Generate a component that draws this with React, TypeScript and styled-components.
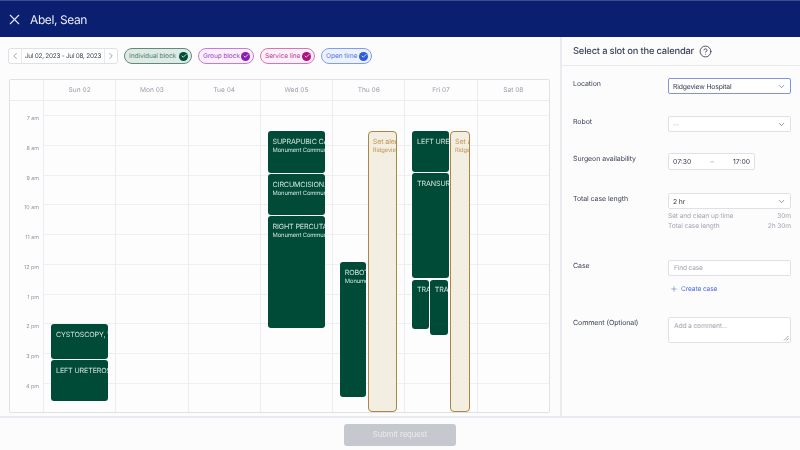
import React from "react";
import styled, { createGlobalStyle } from "styled-components";
import { X, ChevronLeft, ChevronRight, ChevronDown, CircleHelp, Check, Plus } from "lucide-react";

const GlobalStyle = createGlobalStyle`
  html, body { margin: 0; padding: 0; background: #fcfcfd; }
  body {
    font-family: "Inter", "Liberation Sans", sans-serif;
    color: #3a3f52;
    text-rendering: geometricPrecision;
  }
  * { box-sizing: border-box; }
`;

// the reference is a soft, scaled-down capture
const Page = styled.div`
  width: 800px;
  height: 450px;
  overflow: hidden;
  display: flex;
  flex-direction: column;
  filter: blur(0.3px);
`;

const TopBar = styled.header`
  height: 37px;
  flex: none;
  display: flex;
  align-items: center;
  gap: 7px;
  padding: 0 6px;
  background: #0a1f70;
  border-top: 1px solid #3d4f8f;
  color: #e8ebf5;
  font-size: 12px;
  letter-spacing: -0.4px;
`;

const Main = styled.div`
  flex: 1;
  min-height: 0;
  display: flex;
`;

const CalendarPane = styled.section`
  width: 560px;
  flex: none;
  padding: 11px 10px 0 9px;
`;

const Filters = styled.div`
  display: flex;
  align-items: center;
  height: 16px;
  gap: 6px;
  margin-bottom: 15px;
  margin-left: -1px;
`;

const DatePicker = styled.div`
  display: flex;
  width: 110px;
  height: 16px;
  border: 1px solid #dfe1e7;
  border-radius: 3px;
  background: #fff;
`;

const Arrow = styled.span`
  width: 12px;
  flex: none;
  display: flex;
  align-items: center;
  justify-content: center;
  color: #5c6172;
`;

const DateText = styled.span`
  flex: 1;
  border: 1px solid #e8e9ee;
  border-width: 0 1px;
  text-align: center;
  font-size: 6.4px;
  letter-spacing: -0.24px;
  line-height: 14px;
  color: #3f4456;
  white-space: nowrap;
`;

const chipThemes = {
  individual: { bg: "#dfe9e5", border: "#5f8a7c", text: "#4c8371", dot: "#004d38" },
  group: { bg: "#f9f0fc", border: "#c878de", text: "#a63fc6", dot: "#8a1db0" },
  service: { bg: "#fcf0f8", border: "#d873ba", text: "#c03b9b", dot: "#ad1180" },
  open: { bg: "#ecf1fe", border: "#809cf0", text: "#5577e2", dot: "#2f5bdc" },
};

type ChipKind = keyof typeof chipThemes;

const Chip = styled.span<{ $kind: ChipKind; $width: number }>`
  width: ${(p) => p.$width}px;
  height: 16px;
  flex: none;
  display: flex;
  align-items: center;
  justify-content: space-between;
  padding: 0 3px 0 4px;
  border-radius: 8px;
  border: 1px solid ${(p) => chipThemes[p.$kind].border};
  background: ${(p) => chipThemes[p.$kind].bg};
  color: ${(p) => chipThemes[p.$kind].text};
  font-size: 6.6px;
  letter-spacing: -0.1px;
  white-space: nowrap;
`;

const ChipDot = styled.span<{ $kind: ChipKind }>`
  width: 9px;
  height: 9px;
  flex: none;
  display: flex;
  align-items: center;
  justify-content: center;
  border-radius: 50%;
  background: ${(p) => chipThemes[p.$kind].dot};
  color: #fff;
`;

const Calendar = styled.div`
  width: 541px;
  height: 334px;
  border: 1px solid #dfe1e6;
  border-radius: 2px;
  background: #fdfdfe;
  display: flex;
  flex-direction: column;
  overflow: hidden;
`;

const WeekHead = styled.div`
  height: 21px;
  flex: none;
  display: grid;
  grid-template-columns: 33px repeat(7, 1fr);
  border-bottom: 1px solid #ecedf1;
`;

const DayName = styled.div`
  border-left: 1px solid #ecedf0;
  display: flex;
  align-items: center;
  justify-content: center;
  font-size: 6.6px;
  color: #999da8;
`;

const WeekBody = styled.div`
  flex: 1;
  display: grid;
  grid-template-columns: 33px repeat(7, 1fr);
`;

const Times = styled.div`
  padding-top: 15px;
  display: flex;
  flex-direction: column;
`;

const TimeLabel = styled.div`
  height: 29.75px;
  padding-right: 4px;
  text-align: right;
  font-size: 5.4px;
  line-height: 6px;
  color: #8f94a1;
`;

const DayColumn = styled.div`
  position: relative;
  padding-top: 14px;
  border-left: 1px solid #ecedf0;
`;

const HourLine = styled.div`
  height: 29.75px;
  border-top: 1px solid #f0f0f3;
`;

const EventBlock = styled.div<{ $left: number; $top: number; $width: number; $height: number }>`
  position: absolute;
  left: ${(p) => p.$left}px;
  top: ${(p) => p.$top}px;
  width: ${(p) => p.$width}px;
  height: ${(p) => p.$height}px;
  overflow: hidden;
  white-space: nowrap;
  border-radius: 3px;
  background: #004b37;
  color: #d6e5df;
  padding: 5.5px 0 0 5px;
`;

const AlertBlock = styled(EventBlock)`
  background: #f3eee2;
  border: 1px solid #ad8541;
  border-radius: 4px;
  color: #bf9650;
  padding: 4.5px 0 0 4px;
  z-index: 1;
`;

const EventTitle = styled.div`
  font-size: 7.1px;
  letter-spacing: -0.12px;
  line-height: 9px;
`;

const EventSub = styled.div`
  font-size: 5.8px;
  letter-spacing: -0.08px;
  line-height: 9px;
`;

const Sidebar = styled.aside`
  flex: 1;
  border-left: 2px solid #eaebef;
  display: flex;
  flex-direction: column;
`;

const SidebarHead = styled.div`
  height: 29px;
  flex: none;
  display: flex;
  align-items: center;
  gap: 5px;
  padding: 0 11px;
  border-bottom: 1px solid #e8e9ee;
  font-size: 9.4px;
  font-weight: 500;
  letter-spacing: -0.2px;
  color: #3f445a;
`;

const Form = styled.div`
  padding: 12px 9px 0 11px;
  display: flex;
  flex-direction: column;
`;

const Row = styled.div<{ $height: number }>`
  height: ${(p) => p.$height}px;
  display: grid;
  grid-template-columns: 95px 1fr;
  align-items: start;
`;

const Label = styled.label`
  padding-top: 1px;
  font-size: 7px;
  letter-spacing: -0.08px;
  line-height: 10px;
  color: #3a3f54;
`;

const Select = styled.div<{ $focused?: boolean; $muted?: boolean }>`
  height: 16px;
  display: flex;
  align-items: center;
  justify-content: space-between;
  padding: 0 4px;
  background: #fff;
  border-radius: 2px;
  border: 1px solid ${(p) => (p.$focused ? "#7f92e6" : "#dfe1e6")};
  color: ${(p) => (p.$muted ? "#b7bac4" : "#343a4c")};
  font-size: 6.8px;
  letter-spacing: -0.15px;
`;

const TimeRange = styled.div`
  width: 87px;
  height: 17px;
  display: flex;
  align-items: center;
  justify-content: space-between;
  padding: 0 4px;
  background: #fff;
  border-radius: 2px;
  border: 1px solid #dfe1e6;
  font-size: 6.8px;
  color: #343a4c;
`;

const Dash = styled.span`
  color: #8f94a1;
`;

const Summary = styled.div`
  display: flex;
  justify-content: space-between;
  font-size: 6.6px;
  letter-spacing: -0.1px;
  line-height: 9.7px;
  color: #a4a8b3;
`;

const SummaryGroup = styled.div`
  padding-top: 3px;
`;

const TextInput = styled.div`
  height: 16px;
  padding: 0 5px;
  display: flex;
  align-items: center;
  background: #fff;
  border-radius: 2px;
  border: 1px solid #dfe1e6;
  font-size: 6.6px;
  letter-spacing: -0.15px;
  color: #a0a4af;
`;

const CreateLink = styled.div`
  display: flex;
  align-items: center;
  gap: 3px;
  margin: 9px 0 0 2px;
  font-size: 6.6px;
  letter-spacing: -0.1px;
  color: #4c6adf;
`;

const TextArea = styled.div`
  position: relative;
  height: 26px;
  padding: 4px 5px;
  background: #fff;
  border-radius: 2px;
  border: 1px solid #dfe1e6;
  font-size: 6.6px;
  letter-spacing: -0.1px;
  color: #a0a4af;
`;

const Grip = styled.svg`
  position: absolute;
  right: 1px;
  bottom: 1px;
`;

const Footer = styled.footer`
  height: 34px;
  flex: none;
  display: flex;
  justify-content: center;
  align-items: center;
  border-top: 2px solid #e9eaef;
`;

const SubmitButton = styled.button`
  width: 112px;
  height: 22px;
  border: 0;
  border-radius: 3px;
  background: #c5c9cf;
  color: #e9ebee;
  font-family: inherit;
  font-size: 7.6px;
  margin-top: 1px;
`;

const chips: { kind: ChipKind; label: string; width: number }[] = [
  { kind: "individual", label: "Individual block", width: 68 },
  { kind: "group", label: "Group block", width: 56 },
  { kind: "service", label: "Service line", width: 55 },
  { kind: "open", label: "Open time", width: 51 },
];

const days = ["Sun 02", "Mon 03", "Tue 04", "Wed 05", "Thu 06", "Fri 07", "Sat 08"];
const hours = ["7 am", "8 am", "9 am", "10 am", "11 am", "12 pm", "1 pm", "2 pm", "3 pm", "4 pm"];

const sub = "Monument Community Hospital";

type Block = {
  day: number;
  left: number;
  top: number;
  width: number;
  height: number;
  title: string;
  sub?: string;
  alert?: boolean;
};

// top is measured from the top of the week body
const blocks: Block[] = [
  { day: 0, left: 7, top: 223, width: 57, height: 35, title: "CYSTOSCOPY, WITH" },
  { day: 0, left: 7, top: 259, width: 57, height: 41, title: "LEFT URETEROSCOPY" },
  { day: 3, left: 6.7, top: 30, width: 57.3, height: 42, title: "SUPRAPUBIC CATHETER", sub },
  { day: 3, left: 6.7, top: 73, width: 57.3, height: 41, title: "CIRCUMCISION.", sub },
  { day: 3, left: 6.7, top: 115, width: 57.3, height: 112, title: "RIGHT PERCUTANEOUS", sub },
  { day: 4, left: 6.7, top: 161, width: 26.5, height: 135, title: "ROBOTIC", sub },
  { day: 4, left: 34.7, top: 30, width: 29, height: 281, title: "Set alert", sub: "Ridgeview Hospital", alert: true },
  { day: 5, left: 6.7, top: 30, width: 37, height: 41, title: "LEFT URETEROSCOPY" },
  { day: 5, left: 6.7, top: 72, width: 37, height: 105, title: "TRANSURETHRAL" },
  { day: 5, left: 6.7, top: 178.5, width: 16.5, height: 49.5, title: "TRANSURETHRAL" },
  { day: 5, left: 24.4, top: 178.5, width: 18.5, height: 55.5, title: "TRANSURETHRAL" },
  { day: 5, left: 44.7, top: 30, width: 19.5, height: 281, title: "Set alert", sub: "Ridgeview Hospital", alert: true },
];

const Caret = () => <ChevronDown size={9} strokeWidth={1.6} color="#4b5062" />;

const App: React.FC = () => {
  return (
    <Page>
      <GlobalStyle />
      <TopBar>
        <X size={17} strokeWidth={1.5} />
        <span>Abel, Sean</span>
      </TopBar>
      <Main>
        <CalendarPane>
          <Filters>
            <DatePicker>
              <Arrow>
                <ChevronLeft size={10} strokeWidth={1.4} />
              </Arrow>
              <DateText>Jul 02, 2023 - Jul 08, 2023</DateText>
              <Arrow>
                <ChevronRight size={10} strokeWidth={1.4} />
              </Arrow>
            </DatePicker>
            {chips.map((chip) => (
              <Chip key={chip.kind} $kind={chip.kind} $width={chip.width}>
                {chip.label}
                <ChipDot $kind={chip.kind}>
                  <Check size={6} strokeWidth={3} />
                </ChipDot>
              </Chip>
            ))}
          </Filters>
          <Calendar>
            <WeekHead>
              <span />
              {days.map((day) => (
                <DayName key={day}>{day}</DayName>
              ))}
            </WeekHead>
            <WeekBody>
              <Times>
                {hours.map((hour) => (
                  <TimeLabel key={hour}>{hour}</TimeLabel>
                ))}
              </Times>
              {days.map((day, index) => (
                <DayColumn key={day}>
                  {hours.map((hour) => (
                    <HourLine key={hour} />
                  ))}
                  {blocks
                    .filter((block) => block.day === index)
                    .map((block) => {
                      const Box = block.alert ? AlertBlock : EventBlock;
                      return (
                        <Box
                          key={block.title + block.top + block.left}
                          $left={block.left}
                          $top={block.top}
                          $width={block.width}
                          $height={block.height}
                        >
                          <EventTitle>{block.title}</EventTitle>
                          {block.sub && <EventSub>{block.sub}</EventSub>}
                        </Box>
                      );
                    })}
                </DayColumn>
              ))}
            </WeekBody>
          </Calendar>
        </CalendarPane>
        <Sidebar>
          <SidebarHead>
            Select a slot on the calendar
            <CircleHelp size={13} strokeWidth={1.5} color="#2c3144" />
          </SidebarHead>
          <Form>
            <Row $height={38}>
              <Label>Location</Label>
              <Select $focused>
                Ridgeview Hospital
                <Caret />
              </Select>
            </Row>
            <Row $height={37}>
              <Label>Robot</Label>
              <Select $muted>
                --
                <Caret />
              </Select>
            </Row>
            <Row $height={40}>
              <Label>Surgeon availability</Label>
              <TimeRange>
                <span>07:30</span>
                <Dash>–</Dash>
                <span>17:00</span>
              </TimeRange>
            </Row>
            <Row $height={67}>
              <Label>Total case length</Label>
              <div>
                <Select>
                  2 hr
                  <Caret />
                </Select>
                <SummaryGroup>
                  <Summary>
                    <span>Set and clean up time</span>
                    <span>30m</span>
                  </Summary>
                  <Summary>
                    <span>Total case length</span>
                    <span>2h 30m</span>
                  </Summary>
                </SummaryGroup>
              </div>
            </Row>
            <Row $height={57}>
              <Label>Case</Label>
              <div>
                <TextInput>Find case</TextInput>
                <CreateLink>
                  <Plus size={8} strokeWidth={1.6} />
                  Create case
                </CreateLink>
              </div>
            </Row>
            <Row $height={30}>
              <Label>Comment (Optional)</Label>
              <TextArea>
                Add a comment...
                <Grip width="6" height="6" viewBox="0 0 6 6">
                  <path d="M1 5.5 5.5 1M3.5 5.5 5.5 3.5" stroke="#777b88" strokeWidth="0.7" fill="none" />
                </Grip>
              </TextArea>
            </Row>
          </Form>
        </Sidebar>
      </Main>
      <Footer>
        <SubmitButton>Submit request</SubmitButton>
      </Footer>
    </Page>
  );
};

export default App;
